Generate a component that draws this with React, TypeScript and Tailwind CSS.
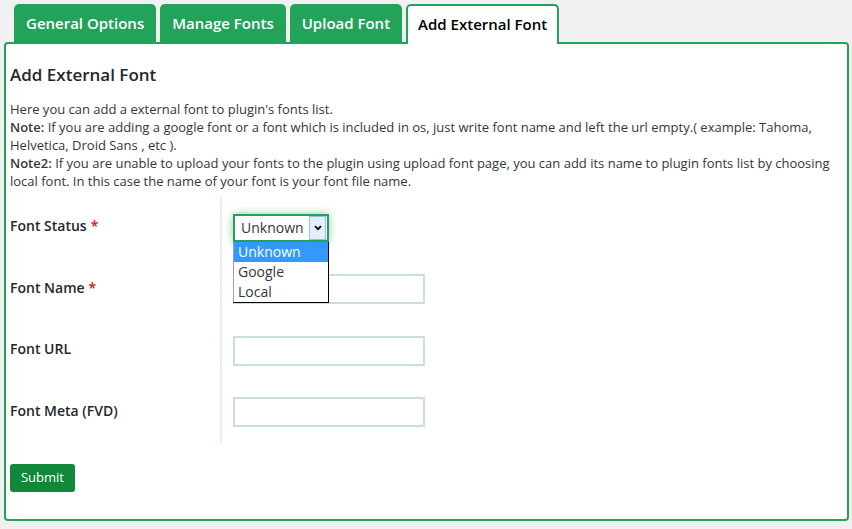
const tabs = ['General Options', 'Manage Fonts', 'Upload Font'];

const fields = [
  { label: 'Font Name', required: true },
  { label: 'Font URL', required: false },
  { label: 'Font Meta (FVD)', required: false },
];

function Label({ text, required }: { text: string; required?: boolean }) {
  return (
    <div className="w-[212px] shrink-0 self-stretch flex items-center pb-[4px] border-r-2 border-[#e4f3ea] text-[14px] font-semibold text-[#23282d]">
      {text}
      {required && <span className="ml-[4px] text-[#e01010]">*</span>}
    </div>
  );
}

export default function App() {
  return (
    <div className="min-h-[529px] bg-[#f1f1f1] pl-[4px] pr-[3px] pt-[4px] pb-[7px] font-['Open_Sans',sans-serif]">
      <div className="flex items-start gap-[4px] pl-[10px]">
        {tabs.map((t) => (
          <div
            key={t}
            className="h-[38px] px-[12px] flex items-center rounded-t-[5px] bg-[#23a25a] text-white text-[15px] font-semibold"
          >
            {t}
          </div>
        ))}
        <div className="relative z-10 -mb-[2px] h-[40px] px-[10px] pb-[2px] flex items-center rounded-t-[5px] border-2 border-b-0 border-[#23a25a] bg-white text-black text-[15px] font-semibold">
          Add External Font
        </div>
      </div>

      <div className="border-2 border-[#23a25a] rounded-[4px] bg-white pl-[4px] pr-[8px] pt-[18px] pb-[27px] text-[#32373c]">
        <h3 className="text-[17px] leading-[25px] font-semibold text-[#23282d]">Add External Font</h3>
        <div className="mt-[13px] text-[13px] leading-[18px]">
          <p>Here you can add a external font to plugin's fonts list.</p>
          <p>
            <b className="font-semibold">Note:</b> If you are adding a google font or a font which is included in os, just write
            font name and left the url empty.( example: Tahoma, Helvetica, Droid Sans , etc ).
          </p>
          <p>
            <b className="font-semibold">Note2:</b> If you are unable to upload your fonts to the plugin using upload font page,
            you can add its name to plugin fonts list by choosing local font. In this case the name of your font is your font
            file name.
          </p>
        </div>

        <div className="mt-[7px]">
          <div className="flex items-center h-[61.5px]">
            <Label text="Font Status" required />
            <div className="relative ml-[11px]">
              <div className="w-[96px] h-[28px] flex items-center justify-between border-2 border-[#23a25a] shadow-[0_0_8px_rgba(35,162,90,0.55)] bg-white pl-[6px] pr-[1px]">
                <span className="text-[14px] text-[#32373c]">Unknown</span>
                <span className="w-[17px] h-[24px] flex items-center justify-center bg-[#e3effc] border border-[#9bbbe3]">
                  <svg width="8" height="6" viewBox="0 0 8 6">
                    <path d="M1 1.2 L4 4.2 L7 1.2" fill="none" stroke="#000" strokeWidth="1.8" />
                  </svg>
                </span>
              </div>
              <div className="absolute z-20 left-0 top-[28px] w-[96px] bg-white border border-t-0 border-black border-l-[#a0a0a0] text-[14px] leading-[20px]">
                <div className="pl-[4px] bg-[#3399ff] text-white">Unknown</div>
                <div className="pl-[4px] text-[#32373c]">Google</div>
                <div className="pl-[4px] text-[#32373c]">Local</div>
              </div>
            </div>
          </div>
          {fields.map((f) => (
            <div key={f.label} className="flex items-center h-[61.5px]">
              <Label text={f.label} required={f.required} />
              <input
                type="text"
                className="ml-[11px] w-[192px] h-[30px] border-2 border-[#c9e1d3] bg-white outline-none"
              />
            </div>
          ))}
        </div>

        <button className="mt-[21px] w-[65px] h-[28px] rounded-[3px] bg-[#11873a] text-white text-[13px]">Submit</button>
      </div>
    </div>
  );
}
